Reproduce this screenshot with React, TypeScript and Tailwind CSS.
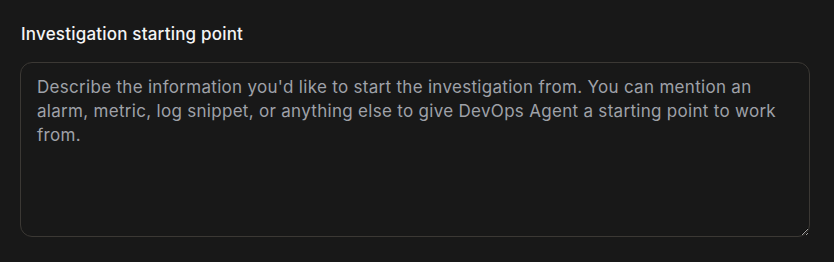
export default function App() {
  return (
    <div className="w-[834px] h-[262px] bg-[#181818] pl-5 pr-6 pt-[22px]" style={{ fontFamily: "Inter, 'Noto Sans', sans-serif" }}>
      <label htmlFor="start" className="block pl-px text-[17px] leading-6 font-medium tracking-[0.2px] text-[#f4f4f5] mb-4">
        Investigation starting point
      </label>
      <textarea
        id="start"
        className="block w-[790px] h-[175px] rounded-xl border border-[#3b3834] bg-[#181818] px-4 py-3 text-[17px] leading-6 tracking-[0.3px] text-[#e4e4e7] placeholder:text-[#9fa1a8] outline-none"
        placeholder="Describe the information you'd like to start the investigation from. You can mention an alarm, metric, log snippet, or anything else to give DevOps Agent a starting point to work from."
      />
    </div>
  );
}
